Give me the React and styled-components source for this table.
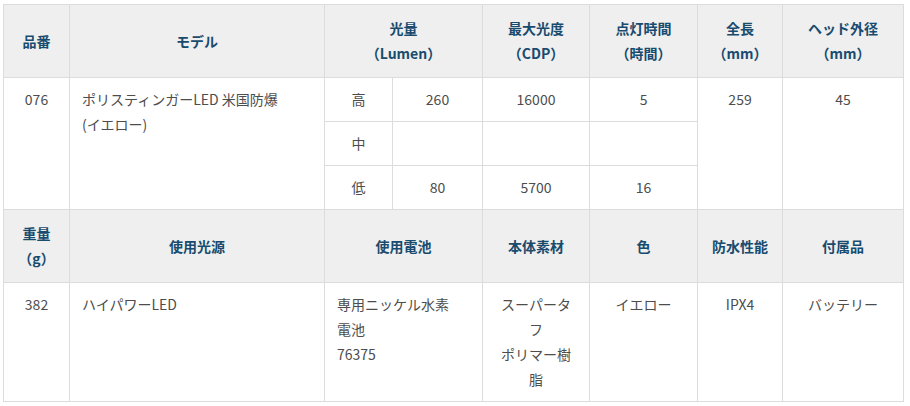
import React from 'react'
import styled, { createGlobalStyle } from 'styled-components'

const GlobalStyle = createGlobalStyle`
    body{
        margin:0;
        background:#fff;
        font-family:"Noto Sans CJK JP","Noto Sans",sans-serif;
    }
`;

const Wrapper = styled.div`
    padding:4px 0px 0px 3px;
`;

const Table = styled.table`
    width:900px;
    table-layout:fixed;
    border-collapse:collapse;
    font-size:14px;
    line-height:25px;
    color:#4d4d4d;
`;

const HeadCell = styled.th`
    background:#efefef;
    color:#184b6e;
    font-weight:700;
    text-align:center;
    vertical-align:middle;
    padding:11px 8px;
    border:1px solid #dcdcdc;
`;

const Cell = styled.td`
    text-align:${props => props.$left ? 'left' : 'center'};
    vertical-align:top;
    padding:9px 12px;
    border:1px solid #dcdcdc;
`;

const Keep = styled.span`
    white-space:nowrap;
`;

const widths = [66, 255, 68, 90, 107, 108, 85, 121];

const Table1Head = [
    { label: ['品番'] },
    { label: ['モデル'] },
    { label: ['光量', '（Lumen）'], span: 2 },
    { label: ['最大光度', '（CDP）'] },
    { label: ['点灯時間', '（時間）'] },
    { label: ['全長', '（mm）'] },
    { label: ['ヘッド外径', '（mm）'] },
];

const Table2Head = [
    { label: ['重量', '（g）'] },
    { label: ['使用光源'] },
    { label: ['使用電池'], span: 2 },
    { label: ['本体素材'] },
    { label: ['色'] },
    { label: ['防水性能'] },
    { label: ['付属品'] },
];

const Lines = ({ items }) => items.map((t, i) => (
    <React.Fragment key={i}>{i > 0 && <br />}{t}</React.Fragment>
));

const HeadRow = ({ cols }) => (
    <tr>
        {cols.map((c, i) => (
            <HeadCell key={i} colSpan={c.span || 1}><Lines items={c.label} /></HeadCell>
        ))}
    </tr>
);

const App = () => {
    return (
        <Wrapper>
            <GlobalStyle />
            <Table>
                <colgroup>
                    {widths.map((w, i) => <col key={i} style={{ width: w }} />)}
                </colgroup>
                <tbody>
                    <HeadRow cols={Table1Head} />
                    <tr>
                        <Cell rowSpan={3}>076</Cell>
                        <Cell rowSpan={3} $left>ポリスティンガーLED 米国防爆 <Keep>(イエロー)</Keep></Cell>
                        <Cell>高</Cell>
                        <Cell>260</Cell>
                        <Cell>16000</Cell>
                        <Cell>5</Cell>
                        <Cell rowSpan={3}>259</Cell>
                        <Cell rowSpan={3}>45</Cell>
                    </tr>
                    <tr>
                        <Cell>中</Cell>
                        <Cell></Cell>
                        <Cell></Cell>
                        <Cell></Cell>
                    </tr>
                    <tr>
                        <Cell>低</Cell>
                        <Cell>80</Cell>
                        <Cell>5700</Cell>
                        <Cell>16</Cell>
                    </tr>
                    <HeadRow cols={Table2Head} />
                    <tr>
                        <Cell>382</Cell>
                        <Cell $left>ハイパワーLED</Cell>
                        <Cell colSpan={2} $left>専用ニッケル水素<br />電池<br />76375</Cell>
                        <Cell>スーパータフ<br />ポリマー樹脂</Cell>
                        <Cell>イエロー</Cell>
                        <Cell>IPX4</Cell>
                        <Cell>バッテリー</Cell>
                    </tr>
                </tbody>
            </Table>
        </Wrapper>
    )
}

export default App
